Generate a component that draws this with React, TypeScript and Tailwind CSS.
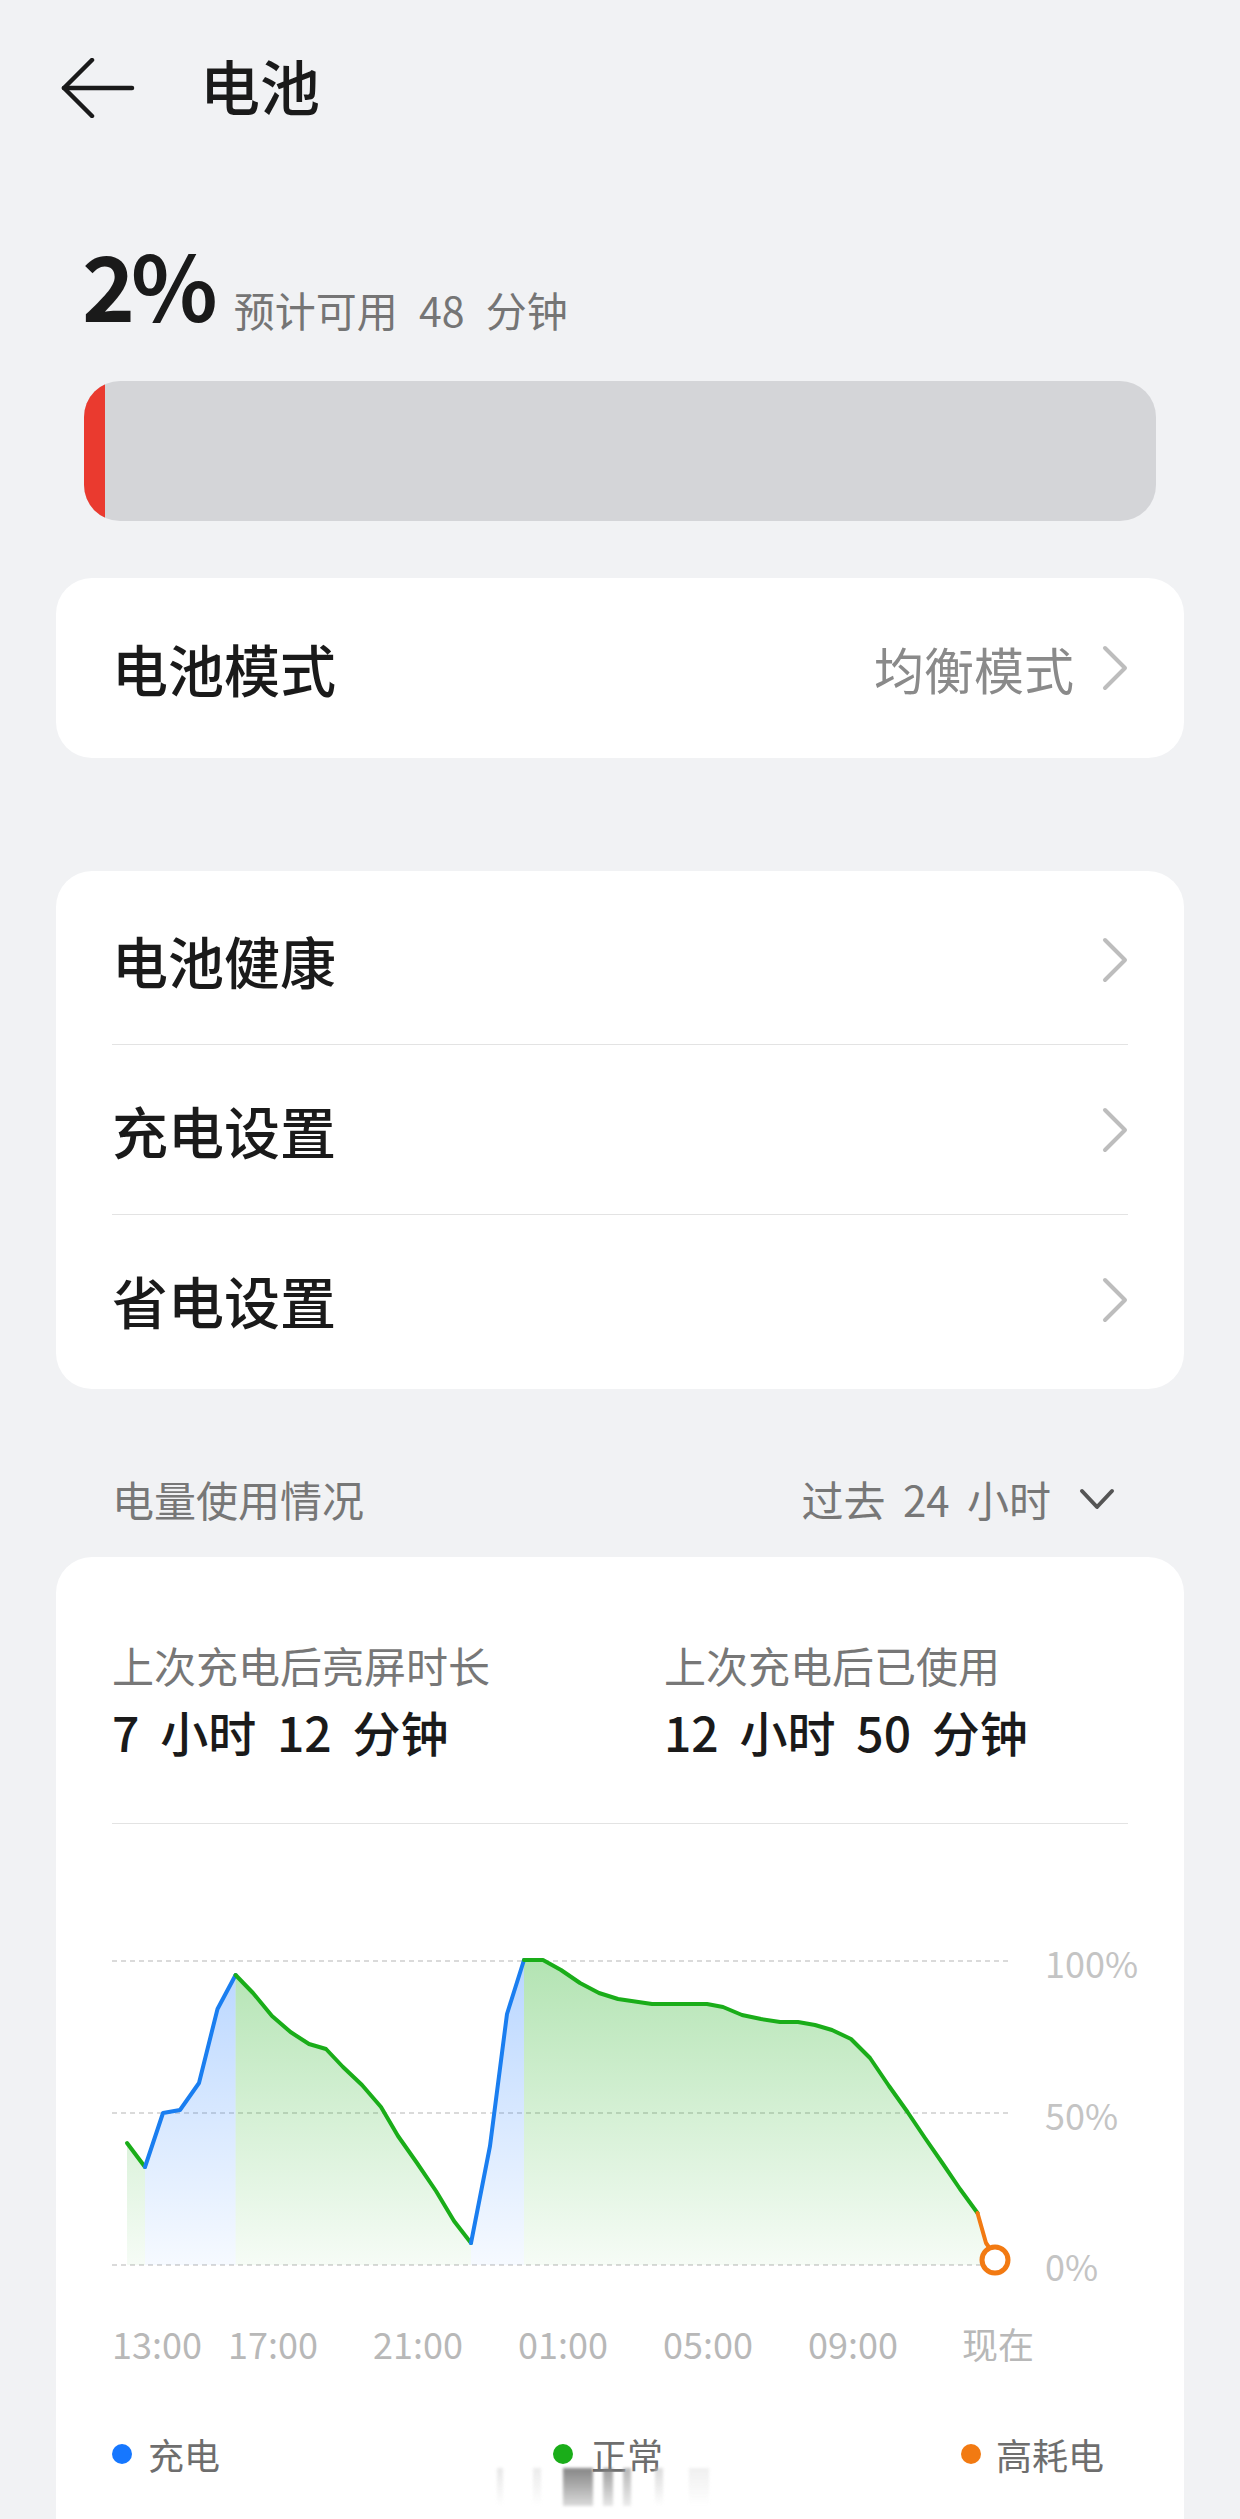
import React from 'react';

type Pt = [number, number];

const BASE = 2264;

const seg = {
  greenA: [[126, 2142], [144, 2166]] as Pt[],
  blueA: [[144, 2166], [162, 2112], [179, 2109], [198, 2082], [216.5, 2008], [234.6, 1974]] as Pt[],
  greenB: [
    [234.6, 1974], [252, 1992], [271, 2015], [289.5, 2031], [308, 2043], [325, 2048], [342, 2066],
    [361, 2084], [380, 2106], [397, 2135], [416, 2162], [435, 2190], [453, 2220], [470, 2242],
  ] as Pt[],
  blueB: [[470, 2242], [489, 2145], [506, 2013], [523, 1959]] as Pt[],
  greenC: [
    [523, 1959], [542, 1959], [560, 1969], [579, 1982], [598, 1992], [617, 1998], [651, 2003],
    [706, 2003], [722, 2006], [741, 2014], [760, 2018], [779, 2021], [797, 2021], [814, 2024],
    [831, 2029], [850, 2038], [869, 2057], [888, 2085], [906.5, 2111], [924, 2137], [942, 2163],
    [959, 2188], [976.5, 2212],
  ] as Pt[],
  orange: [[976.5, 2212], [985, 2242], [992, 2252]] as Pt[],
};

const line = (pts: Pt[]) => pts.map((p) => p.join(',')).join(' ');
const area = (pts: Pt[]) =>
  line([...pts, [pts[pts.length - 1][0], BASE], [pts[0][0], BASE]]);

function ChevronRight() {
  return (
    <svg width="26" height="46" viewBox="0 0 26 46" className="shrink-0">
      <polyline
        points="3,3 23,23 3,43"
        fill="none"
        stroke="#bdbdbd"
        strokeWidth="4"
        strokeLinecap="round"
        strokeLinejoin="round"
      />
    </svg>
  );
}

function Row({ label, last }: { label: string; last?: boolean }) {
  return (
    <div className="h-[170px] flex items-center justify-between relative">
      <span className="text-[56px] leading-none font-medium text-[#1a1a1a]">{label}</span>
      <ChevronRight />
      {!last && <div className="absolute left-0 right-0 bottom-0 h-px bg-[#e3e3e3]" />}
    </div>
  );
}

function Chart() {
  return (
    <div className="flex">
      <svg width="909" height="390" viewBox="111 1900 909 390" className="shrink-0">
        <defs>
          <linearGradient id="g" x1="0" y1="1960" x2="0" y2={BASE} gradientUnits="userSpaceOnUse">
            <stop offset="0" stopColor="#1aad19" stopOpacity="0.33" />
            <stop offset="1" stopColor="#1aad19" stopOpacity="0.04" />
          </linearGradient>
          <linearGradient id="b" x1="0" y1="1960" x2="0" y2={BASE} gradientUnits="userSpaceOnUse">
            <stop offset="0" stopColor="#1677ff" stopOpacity="0.3" />
            <stop offset="1" stopColor="#1677ff" stopOpacity="0.04" />
          </linearGradient>
        </defs>
        {[1960, 2112, 2264].map((y) => (
          <line key={y} x1="111" x2="1010" y1={y} y2={y} stroke="#dadada" strokeWidth="2" strokeDasharray="5 4" />
        ))}
        <polygon points={area(seg.greenA)} fill="url(#g)" />
        <polygon points={area(seg.blueA)} fill="url(#b)" />
        <polygon points={area(seg.greenB)} fill="url(#g)" />
        <polygon points={area(seg.blueB)} fill="url(#b)" />
        <polygon points={area([...seg.greenC, ...seg.orange.slice(1)])} fill="url(#g)" />
        <g fill="none" strokeWidth="4" strokeLinejoin="round" strokeLinecap="round">
          <polyline points={line(seg.greenA)} stroke="#1aad19" />
          <polyline points={line(seg.blueA)} stroke="#1a7ef0" />
          <polyline points={line(seg.greenB)} stroke="#1aad19" />
          <polyline points={line(seg.blueB)} stroke="#1a7ef0" />
          <polyline points={line(seg.greenC)} stroke="#1aad19" />
          <polyline points={line(seg.orange)} stroke="#f27a12" />
        </g>
        <circle cx="994" cy="2259" r="13" fill="#fff" stroke="#f27a12" strokeWidth="5" />
      </svg>
      <div className="ml-[24px] mt-[41px] h-[343px] flex flex-col justify-between text-[36px] leading-[40px] text-[#c4c4c4]">
        <span>100%</span>
        <span>50%</span>
        <span>0%</span>
      </div>
    </div>
  );
}

export default function App() {
  const times: [string, string][] = [
    ['13:00', 'w-[116px]'],
    ['17:00', 'w-[145px]'],
    ['21:00', 'w-[145px]'],
    ['01:00', 'w-[145px]'],
    ['05:00', 'w-[145px]'],
    ['09:00', 'w-[154px]'],
    ['现在', ''],
  ];

  return (
    <div className="h-[2519px] overflow-hidden bg-[#f1f2f4] font-['Noto_Sans_CJK_SC',sans-serif]">
      {/* header */}
      <div className="h-[176px] flex items-center pl-[61px]">
        <svg width="74" height="60" viewBox="0 0 74 60">
          <g fill="none" stroke="#1a1a1a" strokeWidth="4.5" strokeLinecap="round" strokeLinejoin="round">
            <line x1="3" y1="30" x2="71" y2="30" />
            <polyline points="31,2 3,30 31,58" />
          </g>
        </svg>
        <h1 className="ml-[65px] text-[60px] leading-none font-medium text-[#1a1a1a] -mt-[6px]">电池</h1>
      </div>

      {/* level */}
      <div className="mt-[62px] pl-[82px] flex items-baseline">
        <span className="text-[90px] leading-none font-bold tracking-[-4px] text-[#1a1a1a]">2%</span>
        <span className="ml-[20px] text-[41px] leading-none text-[#757575] translate-y-[5px] [word-spacing:12px]">
          预计可用 48 分钟
        </span>
      </div>
      <div className="mt-[53px] mx-[84px] h-[140px] rounded-[36px] bg-[#d4d5d8] overflow-hidden flex">
        <div className="w-[21px] bg-[#ea3a2f]" />
      </div>

      {/* mode */}
      <div className="mt-[57px] mx-[56px] h-[180px] rounded-[36px] bg-white px-[56px] flex items-center justify-between">
        <span className="text-[56px] leading-none font-medium text-[#1a1a1a]">电池模式</span>
        <div className="flex items-center gap-[28px]">
          <span className="text-[50px] leading-none text-[#8a8a8a]">均衡模式</span>
          <ChevronRight />
        </div>
      </div>

      {/* settings */}
      <div className="mt-[113px] mx-[56px] rounded-[36px] bg-white px-[56px] py-[4px]">
        <Row label="电池健康" />
        <Row label="充电设置" />
        <Row label="省电设置" last />
      </div>

      {/* usage header */}
      <div className="mt-[82px] pl-[112px] pr-[125px] h-[56px] flex items-center justify-between text-[42px] text-[#777]">
        <span className="leading-none">电量使用情况</span>
        <div className="flex items-center">
          <span className="leading-none [word-spacing:8px]">过去 24 小时</span>
          <svg width="36" height="22" viewBox="0 0 36 22" className="ml-[28px]">
            <polyline points="3,3 18,19 33,3" fill="none" stroke="#555" strokeWidth="4" strokeLinecap="round" strokeLinejoin="round" />
          </svg>
        </div>
      </div>

      {/* usage card */}
      <div className="mt-[30px] mx-[56px] rounded-t-[36px] bg-white px-[56px] pt-[80px] pb-[80px] relative">
        <div className="flex">
          <div className="w-[552px]">
            <div className="text-[42px] leading-[56px] text-[#777]">上次充电后亮屏时长</div>
            <div className="mt-[8px] text-[48px] leading-[60px] font-medium text-[#1a1a1a] [word-spacing:10px]">
              7 小时 12 分钟
            </div>
          </div>
          <div>
            <div className="text-[42px] leading-[56px] text-[#777]">上次充电后已使用</div>
            <div className="mt-[8px] text-[48px] leading-[60px] font-medium text-[#1a1a1a] [word-spacing:10px]">
              12 小时 50 分钟
            </div>
          </div>
        </div>
        <div className="mt-[62px] h-px bg-[#e3e3e3]" />

        <div className="mt-[77px]">
          <Chart />
        </div>

        <div className="mt-[28px] flex text-[36px] leading-[48px] text-[#b8b8b8]">
          {times.map(([t, w]) => (
            <span key={t} className={w}>{t}</span>
          ))}
        </div>

        <div className="mt-[63px] flex items-center text-[36px] leading-[48px] text-[#6e6e6e]">
          <div className="w-[441px] flex items-center">
            <span className="w-[20px] h-[20px] rounded-full bg-[#1677ff]" />
            <span className="ml-[16px]">充电</span>
          </div>
          <div className="w-[408px] flex items-center">
            <span className="w-[20px] h-[20px] rounded-full bg-[#1aad19]" />
            <span className="ml-[18px]">正常</span>
          </div>
          <div className="flex items-center">
            <span className="w-[20px] h-[20px] rounded-full bg-[#f27a12]" />
            <span className="ml-[15px]">高耗电</span>
          </div>
        </div>

        {/* blurred watermark strip */}
        <div className="absolute left-[441px] top-[911px] w-[245px] h-[38px] flex gap-[10px] blur-[1.5px] opacity-70">
          <div className="w-[6px] bg-gradient-to-b from-[#ddd] to-transparent" />
          <div className="w-[8px] ml-[20px] bg-gradient-to-b from-[#e2e2e2] to-transparent" />
          <div className="w-[30px] ml-[12px] bg-gradient-to-b from-[#555] to-[#ccc]" />
          <div className="w-[10px] bg-gradient-to-b from-[#777] to-[#ddd]" />
          <div className="w-[8px] bg-gradient-to-b from-[#999] to-[#e5e5e5]" />
          <div className="w-[8px] ml-[14px] bg-gradient-to-b from-[#ccc] to-transparent" />
          <div className="w-[20px] ml-[16px] bg-gradient-to-b from-[#e8e8e8] to-transparent" />
        </div>
      </div>
    </div>
  );
}
